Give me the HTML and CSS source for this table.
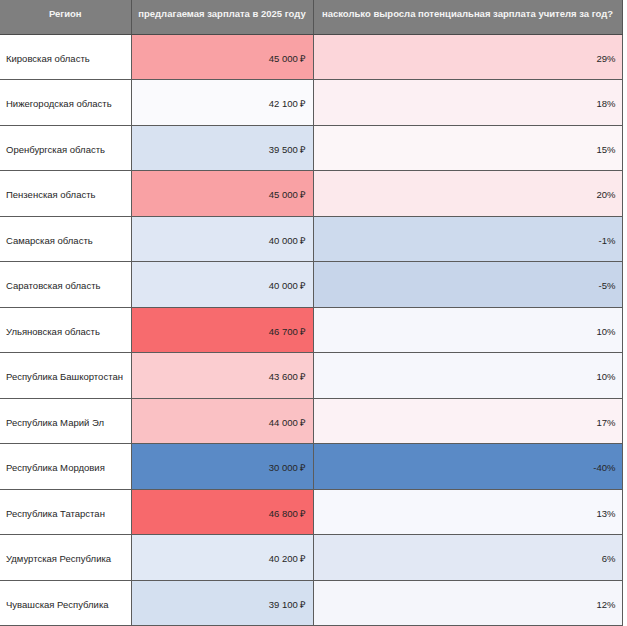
FILE: index.html
```html
<!DOCTYPE html>
<html lang="ru">
<head>
<meta charset="utf-8">
<title>Зарплаты учителей</title>
<link rel="stylesheet" href="styles.css">
</head>
<body>
<table class="sheet">
  <colgroup>
    <col class="c-region">
    <col class="c-salary">
    <col class="c-growth">
  </colgroup>
  <thead>
    <tr>
      <th>Регион</th>
      <th>предлагаемая зарплата в 2025 году</th>
      <th>насколько выросла потенциальная зарплата учителя за год?</th>
    </tr>
  </thead>
  <tbody>
    <tr class="r1"><td>Кировская область</td><td class="num" style="background:rgb(249,161,164)">45 000 ₽</td><td class="num" style="background:rgb(252,214,218)">29%</td></tr>
    <tr class="r2"><td>Нижегородская область</td><td class="num" style="background:rgb(250,250,253)">42 100 ₽</td><td class="num" style="background:rgb(252,240,243)">18%</td></tr>
    <tr class="r1"><td>Оренбургская область</td><td class="num" style="background:rgb(216,226,241)">39 500 ₽</td><td class="num" style="background:rgb(252,246,248)">15%</td></tr>
    <tr class="r2"><td>Пензенская область</td><td class="num" style="background:rgb(249,161,164)">45 000 ₽</td><td class="num" style="background:rgb(252,233,236)">20%</td></tr>
    <tr class="r1"><td>Самарская область</td><td class="num" style="background:rgb(223,231,244)">40 000 ₽</td><td class="num" style="background:rgb(205,218,237)">-1%</td></tr>
    <tr class="r2"><td>Саратовская область</td><td class="num" style="background:rgb(223,231,244)">40 000 ₽</td><td class="num" style="background:rgb(199,213,234)">-5%</td></tr>
    <tr class="r1"><td>Ульяновская область</td><td class="num" style="background:rgb(247,107,110)">46 700 ₽</td><td class="num" style="background:rgb(246,247,252)">10%</td></tr>
    <tr class="r2"><td>Республика Башкортостан</td><td class="num" style="background:rgb(251,205,208)">43 600 ₽</td><td class="num" style="background:rgb(246,247,252)">10%</td></tr>
    <tr class="r1"><td>Республика Марий Эл</td><td class="num" style="background:rgb(250,193,196)">44 000 ₽</td><td class="num" style="background:rgb(252,242,245)">17%</td></tr>
    <tr class="r2"><td>Республика Мордовия</td><td class="num" style="background:rgb(90,138,198)">30 000 ₽</td><td class="num" style="background:rgb(90,138,198)">-40%</td></tr>
    <tr class="r1"><td>Республика Татарстан</td><td class="num" style="background:rgb(247,105,108)">46 800 ₽</td><td class="num" style="background:rgb(247,248,253)">13%</td></tr>
    <tr class="r2"><td>Удмуртская Республика</td><td class="num" style="background:rgb(225,233,245)">40 200 ₽</td><td class="num" style="background:rgb(226,232,244)">6%</td></tr>
    <tr class="r1"><td>Чувашская Республика</td><td class="num" style="background:rgb(212,224,240)">39 100 ₽</td><td class="num" style="background:rgb(245,246,251)">12%</td></tr>
  </tbody>
</table>
</body>
</html>
```

FILE: styles.css
```css
html, body {
  margin: 0;
  padding: 0;
  background: #ffffff;
}

.sheet {
  border-collapse: collapse;
  table-layout: fixed;
  width: 622px;
  font-family: "Liberation Sans", Arial, sans-serif;
  font-size: 9.5px;
  color: #262626;
}

.c-region { width: 131px; }
.c-salary { width: 182px; }
.c-growth { width: 309px; }

.sheet th {
  background: #7f7f7f;
  color: #f4f4f4;
  font-weight: bold;
  font-size: 9.5px;
  height: 34px;
  padding: 8px 2px 0;
  text-align: center;
  vertical-align: top;
  box-sizing: border-box;
  border-right: 1px solid #555555;
  border-bottom: 1px solid #4a4a4a;
  white-space: nowrap;
}

.sheet td {
  padding: 3px 6px 0;
  border-right: 1px solid #5c5c5c;
  border-bottom: 1px solid #5c5c5c;
  vertical-align: middle;
  white-space: nowrap;
  overflow: hidden;
}

.sheet tr.r1 td { height: 41px; }
.sheet tr.r2 td { height: 42px; }

.sheet td.num {
  text-align: right;
  padding-right: 6px;
}
```
